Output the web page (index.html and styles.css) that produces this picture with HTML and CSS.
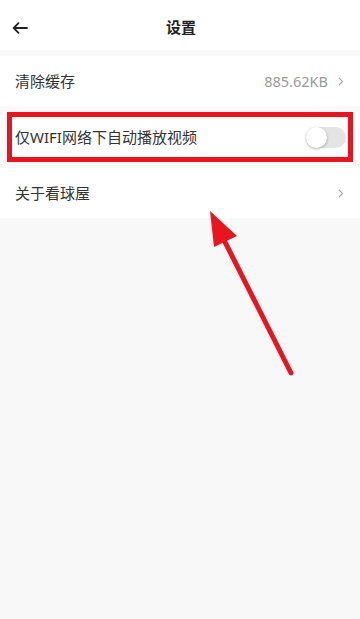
FILE: index.html
```html
<!DOCTYPE html>
<html lang="zh-CN">
<head>
<meta charset="utf-8">
<meta name="viewport" content="width=360">
<title>设置</title>
<link rel="stylesheet" href="styles.css">
</head>
<body>
<div class="page">
  <header class="topbar">
    <svg class="back" width="16" height="12" viewBox="0 0 16 12">
      <path d="M15 6H2M6.5 1.2L1.7 6l4.8 4.8" fill="none" stroke="#222" stroke-width="1.8" stroke-linecap="round" stroke-linejoin="round"/>
    </svg>
    <h1 class="title">设置</h1>
  </header>
  <div class="list">
    <div class="row">
      <span class="label">清除缓存</span>
      <span class="right">
        <span class="value">885.62KB</span>
        <svg class="chev" width="6" height="9" viewBox="0 0 6 9"><path d="M1 1l3.5 3.5L1 8" fill="none" stroke="#a8a8a8" stroke-width="1.1"/></svg>
      </span>
    </div>
    <div class="row">
      <span class="label">仅WIFI网络下自动播放视频</span>
      <span class="toggle"><span class="knob"></span></span>
    </div>
    <div class="row">
      <span class="label">关于看球屋</span>
      <svg class="chev" width="6" height="9" viewBox="0 0 6 9"><path d="M1 1l3.5 3.5L1 8" fill="none" stroke="#a8a8a8" stroke-width="1.1"/></svg>
    </div>
  </div>
  <div class="highlight"></div>
  <svg class="pointer" width="360" height="619" viewBox="0 0 360 619">
    <line x1="291" y1="373" x2="222" y2="236" stroke="#e8151f" stroke-width="5" stroke-linecap="round"/>
    <polygon points="210,211 237,236 214,247" fill="#e8151f"/>
  </svg>
</div>
</body>
</html>
```
FILE: styles.css
```css
* { box-sizing: border-box; }
html, body {
  margin: 0;
  padding: 0;
  background: #f8f8f8;
  font-family: "Noto Sans", "Noto Sans CJK SC", sans-serif;
}
.page {
  position: relative;
  width: 360px;
  height: 619px;
  overflow: hidden;
  background: #f8f8f8;
}
.topbar {
  height: 50px;
  background: #fff;
  display: flex;
  align-items: center;
  justify-content: center;
  position: relative;
}
.back {
  position: absolute;
  left: 12px;
  top: 22px;
}
.title {
  margin: 0;
  font-size: 15px;
  font-weight: 700;
  color: #222;
  line-height: 1;
  padding-top: 5px;
  padding-left: 2px;
}
.list {
  display: flex;
  flex-direction: column;
  gap: 6px;
  padding-top: 6px;
}
.row {
  height: 50px;
  background: #fff;
  display: flex;
  align-items: center;
  justify-content: space-between;
  padding: 0 16px 0 15px;
}
.label {
  font-size: 15px;
  color: #333;
  line-height: 1;
}
.right {
  display: flex;
  align-items: center;
  gap: 10px;
}
.value {
  font-size: 14.5px;
  color: #9a9a9a;
  line-height: 1;
}
.chev { display: block; }
.toggle {
  width: 40px;
  height: 21px;
  border-radius: 11px;
  background: #e4e4e4;
  position: relative;
  margin-right: -2px;
}
.knob {
  position: absolute;
  left: 0;
  top: 0;
  width: 21px;
  height: 21px;
  border-radius: 50%;
  background: #fff;
  box-shadow: 0 1px 3px rgba(0,0,0,0.3);
}
.highlight {
  position: absolute;
  left: 7px;
  top: 112px;
  width: 346px;
  height: 50px;
  border: 5px solid #e8151f;
}
.pointer {
  position: absolute;
  left: 0;
  top: 0;
}
```
